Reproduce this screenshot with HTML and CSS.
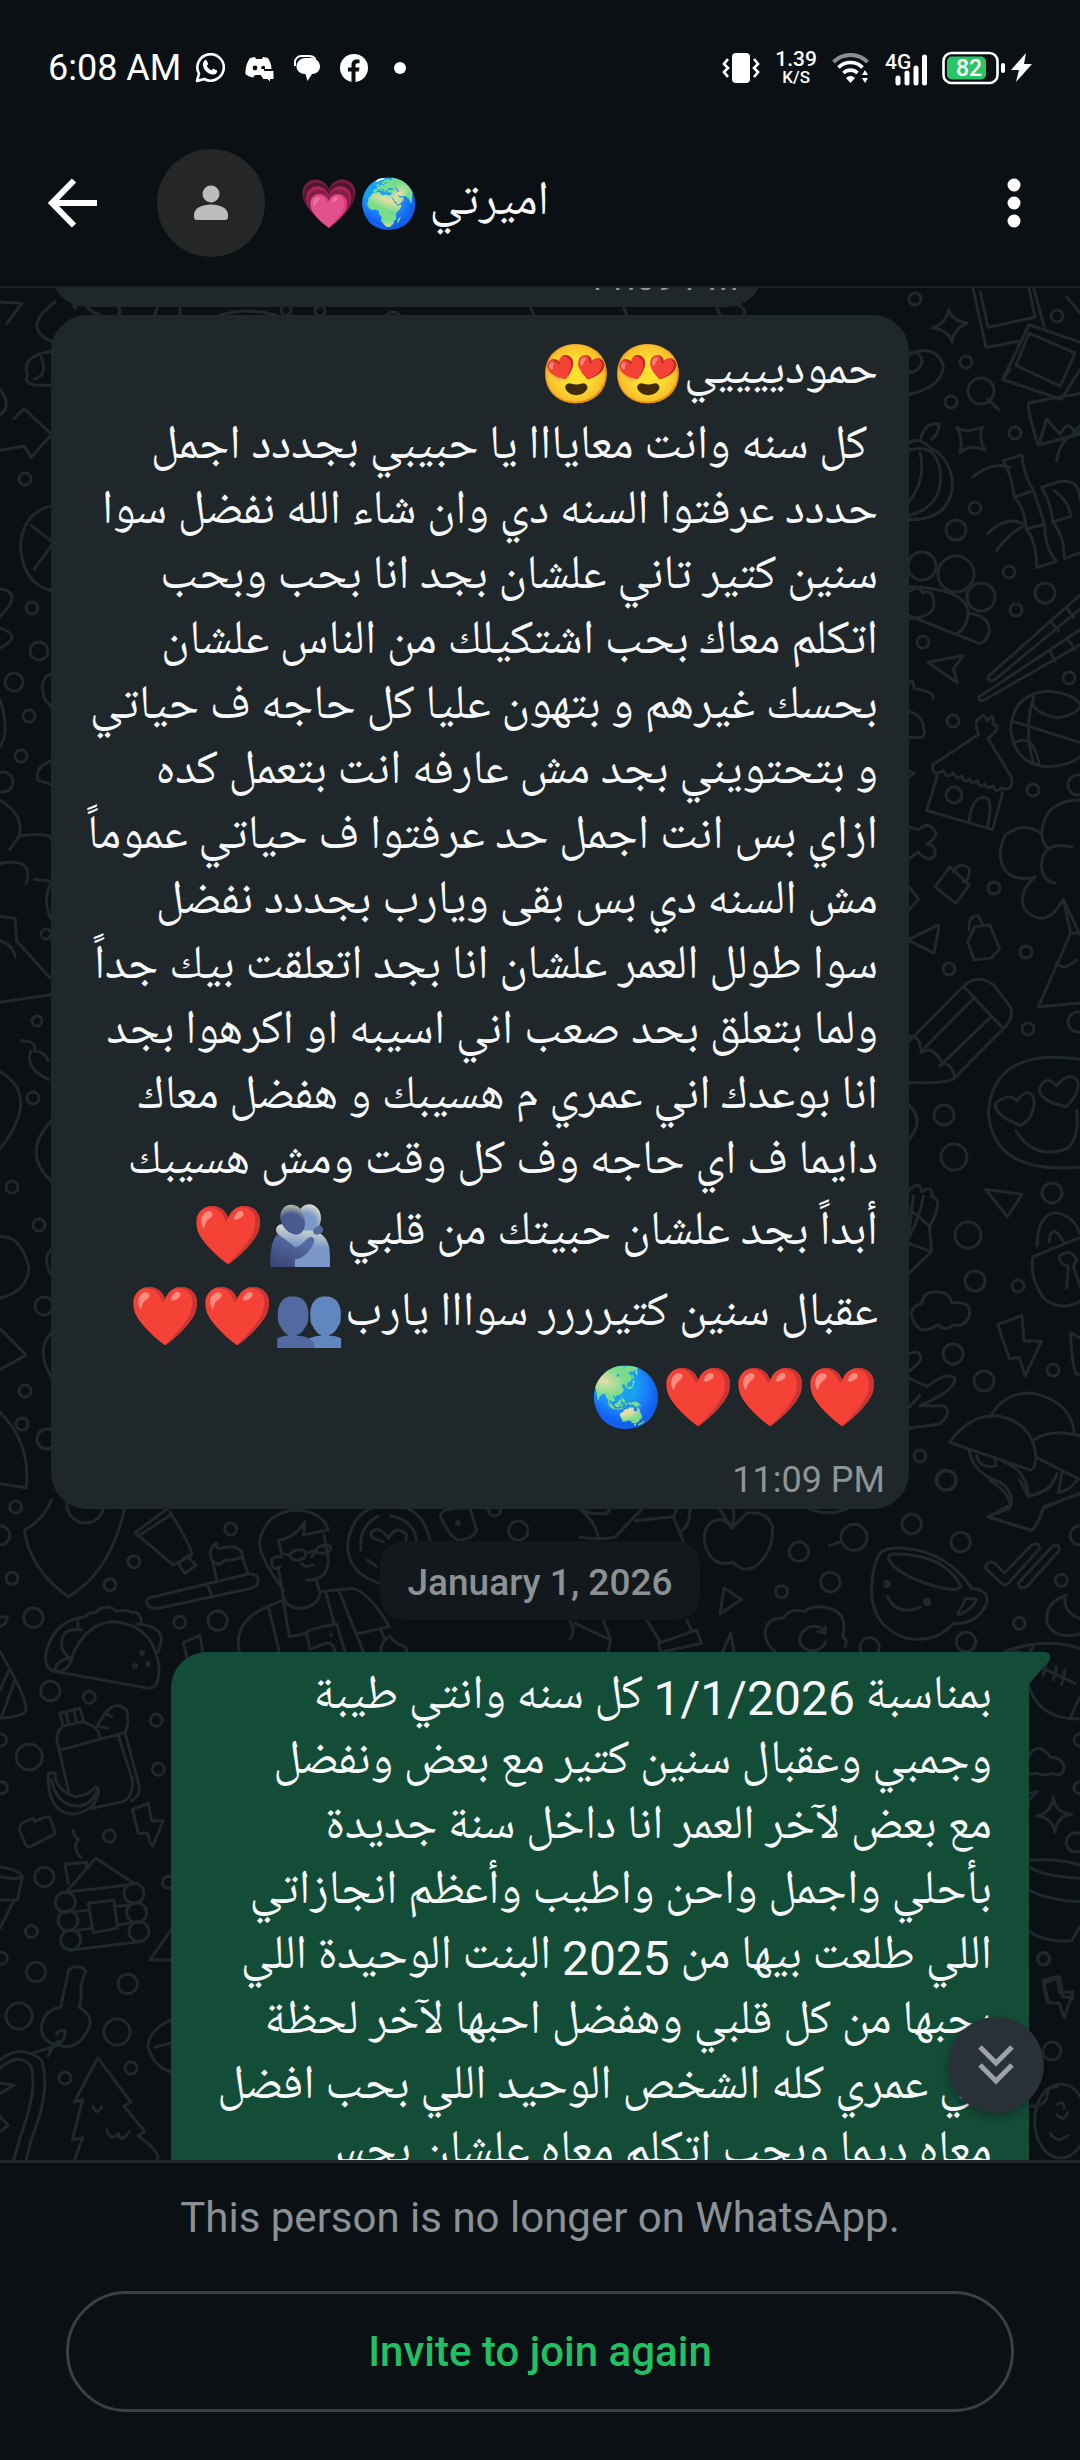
FILE: index.html
```
<!DOCTYPE html>
<html lang="ar">
<head>
    <meta charset="UTF-8">
    <meta name="viewport" content="width=device-width, initial-scale=1.0">
    <title>اميرتي</title>
    <link rel="stylesheet" href="styles.css">
</head>
<body>
    <div class="status-bar">
        <div class="status-group">
            <span class="clock">6:08 AM</span>
            <!-- whatsapp -->
            <svg width="30" height="30" viewBox="0 0 30 30">
                <path d="M2 28l2-7.300A13.200 13.200 0 1 1 9.300 26z" fill="none" stroke="#fff" stroke-width="2.600" stroke-linejoin="round"/>
                <path d="M9.500 7.600c.7-.8 1.800-.8 2.200 0l1.300 2.900c.2.600-.1 1.200-1.200 2.300.9 2 2.700 3.700 4.900 4.600 1.100-1.500 1.500-1.700 2.100-1.500l2.900 1.400c.6.300.6.700.3 1.600-.6 1.800-2.500 2.900-4.400 2.700-5-.7-9.400-5.300-9.700-9.600-.1-1.800.8-3.400 1.600-4.400z" fill="#fff"/>
            </svg>
            <!-- discord -->
            <svg width="30" height="30" viewBox="0 0 30 30">
                <path d="M6 5l5-1 1 2h6l1-2 5 1c2 3 3.500 7 3.500 11H20v8.500h-2L17 22h-6l-2 2.500c-3-.5-5.500-1.500-7.500-3.500C1 15 3 9 6 5z" fill="#fff"/>
                <circle cx="11" cy="15" r="2.400" fill="#0b1014"/>
                <path d="M17 15a2.400 2.400 0 0 1 4-1.500V16h-3z" fill="#0b1014"/>
                <path d="M19 18h10.500v8H26v2.500L23.500 26H19z" fill="#fff"/>
            </svg>
            <!-- messages -->
            <svg width="28" height="30" viewBox="0 0 28 30">
                <path d="M2 13V9c0-3 3-6 6-6h8c3 0 5 1 6.500 3" fill="none" stroke="#fff" stroke-width="2"/>
                <path d="M12 5h6c5 0 9 4 9 8.500S23.500 21 19 21l-4.500 7-2-7C7 21 3.500 17.500 3.500 13.500S7 5 12 5z" fill="#fff"/>
            </svg>
            <!-- facebook -->
            <svg width="28" height="28" viewBox="0 0 28 28">
                <circle cx="14" cy="14" r="14" fill="#fff"/>
                <path d="M11.500 28V17.500H8v-4h3.500V11c0-3.600 2-5.500 5.200-5.500 1.300 0 2.300.1 2.800.2v3.500h-1.900c-1.500 0-2.100.8-2.100 2.200v2.100h4l-.7 4h-3.300V28z" fill="#0b1014"/>
            </svg>
            <svg width="26" height="26" viewBox="0 0 26 26"><circle cx="13" cy="13" r="6" fill="#fff"/></svg>
        </div>
        <div class="status-group status-right">
            <!-- vibrate -->
            <svg width="38" height="30" viewBox="0 0 38 30">
                <rect x="10" width="18" height="30" rx="4" fill="#fff"/>
                <path d="M6 6L2 11l4 4-4 4 4 5M32 6l4 5-4 4 4 4-4 5" fill="none" stroke="#fff" stroke-width="2.600"/>
            </svg>
            <div class="net-speed"><span>1.39</span><span class="unit">K/S</span></div>
            <!-- wifi -->
            <svg width="38" height="30" viewBox="0 0 38 30">
                <path d="M1.500 9a24 24 0 0 1 34 0" fill="none" stroke="#8b8f92" stroke-width="4"/>
                <path d="M6.500 14.500a17 17 0 0 1 24 0M11.500 20a10 10 0 0 1 14 0" fill="none" stroke="#fff" stroke-width="3.600"/>
                <path d="M14 25a6 6 0 0 1 9 0l-4.500 5zM30 22l3-5 3 5zM30 25l3 5 3-5z" fill="#fff"/>
            </svg>
            <!-- signal -->
            <svg width="42" height="36" viewBox="0 0 42 36">
                <text x="0" y="19" class="net-type">4G</text>
                <path d="M13 28v5M22 23v10M31 18v15M39.500 7v26" stroke="#fff" stroke-width="5" stroke-linecap="round"/>
            </svg>
            <!-- battery -->
            <svg width="90" height="34" viewBox="0 0 90 34">
                <rect x="1.500" y="2" width="54" height="30" rx="8" fill="none" stroke="#fff" stroke-width="2.600"/>
                <rect x="5" y="5.500" width="39" height="23" rx="5" fill="#2bc467"/>
                <text x="14" y="25" class="charge">82</text>
                <rect x="59" y="12" width="4" height="10" rx="2" fill="#fff"/>
                <path d="M84 2L69 19h8l-3 12 16-18h-8z" fill="#fff"/>
            </svg>
        </div>
    </div>

    <header class="top-bar">
        <button class="icon-btn" aria-label="Back">
            <svg width="50" height="50" viewBox="0 0 50 50" fill="none" stroke="#fff" stroke-width="6">
                <path d="M49 25H5M26 2.500L4 25l22 22.500"/>
            </svg>
        </button>
        <div class="avatar">
            <svg width="36" height="36" viewBox="0 0 36 36" fill="#bdbdbd">
                <circle cx="18" cy="9" r="8.500"/>
                <path d="M1 30c0-7 8-10.500 17-10.500S35 23 35 30v2q0 3-3 3H4q-3 0-3-3z"/>
            </svg>
        </div>
        <h1 class="name" dir="rtl">اميرتي <span class="name-emoji">🌍<span class="pink">💗</span></span></h1>
        <button class="icon-btn menu-btn" aria-label="More options">
            <svg width="14" height="50" viewBox="0 0 14 50" fill="#fff">
                <circle cx="7" cy="7" r="6.500"/><circle cx="7" cy="25" r="6.500"/><circle cx="7" cy="43" r="6.500"/>
            </svg>
        </button>
    </header>

    <main class="chat">
        <!-- wallpaper doodles -->
        <svg class="wallpaper" viewBox="0 288 1080 1872" preserveAspectRatio="xMidYMin slice" aria-hidden="true">
            <g class="dots">
                <circle cx="915" cy="299" r="6"/><circle cx="1057" cy="316" r="6"/><circle cx="966" cy="362" r="6"/><circle cx="951" cy="402" r="6"/>
                <circle cx="981" cy="391" r="13"/><circle cx="1015" cy="433" r="6"/><circle cx="975" cy="508" r="6"/><circle cx="956" cy="530" r="10"/>
                <circle cx="956" cy="574" r="18"/><circle cx="981" cy="597" r="14"/><circle cx="922" cy="566" r="14"/><circle cx="1009" cy="572" r="6"/>
                <circle cx="1045" cy="593" r="10"/><circle cx="1016" cy="610" r="6"/><circle cx="923" cy="642" r="6"/><circle cx="1069" cy="678" r="6"/>
                <circle cx="953" cy="721" r="6"/><circle cx="1033" cy="790" r="6"/><circle cx="954" cy="795" r="8"/><circle cx="994" cy="888" r="6"/>
                <circle cx="1026" cy="952" r="6"/><circle cx="949" cy="969" r="6"/><circle cx="1028" cy="1029" r="6"/><circle cx="944" cy="1115" r="10"/>
                <circle cx="954" cy="1157" r="13"/><circle cx="1052" cy="1193" r="10"/><circle cx="968" cy="1235" r="13"/><circle cx="975" cy="1281" r="10"/>
                <circle cx="1018" cy="1286" r="6"/><circle cx="953" cy="1354" r="10"/><circle cx="984" cy="1381" r="10"/><circle cx="1053" cy="1370" r="6"/>
                <circle cx="920" cy="1456" r="6"/><circle cx="946" cy="1480" r="10"/><circle cx="1078" cy="785" r="10"/><circle cx="1078" cy="1022" r="10"/>
                <circle cx="25" cy="479" r="6"/><circle cx="32" cy="608" r="6"/><circle cx="39" cy="651" r="9"/><circle cx="14" cy="682" r="9"/>
                <circle cx="29" cy="716" r="6"/><circle cx="21" cy="756" r="6"/><circle cx="3" cy="782" r="10"/><circle cx="46" cy="934" r="5"/>
                <circle cx="37" cy="1021" r="5"/><circle cx="33" cy="1098" r="6"/><circle cx="12" cy="1187" r="6"/><circle cx="39" cy="1225" r="6"/>
                <circle cx="25" cy="1391" r="6"/><circle cx="22" cy="1424" r="6"/><circle cx="44" cy="1306" r="9"/><circle cx="47" cy="1439" r="10"/>
                <circle cx="19" cy="2016" r="13"/><circle cx="117" cy="2032" r="13"/><circle cx="131" cy="2068" r="6"/><circle cx="65" cy="2078" r="6"/>
                <circle cx="1044" cy="1959" r="6"/><circle cx="1052" cy="2051" r="9"/>
                <circle cx="286" cy="310" r="5"/><circle cx="320" cy="311" r="5"/><circle cx="393" cy="320" r="8"/>
            </g>
            <!-- right edge: frames, pumpkin, palms, house, pencil, lock, umbrella -->
            <g transform="translate(900 280) scale(.3333 .829)">
                <path d="M95 58Q140 52 145 36Q158 50 202 52Q158 60 157 75Q145 60 95 58zM219 10L258 81L355 74M241 15L264 57L405 45L387 10M400 8L434 58M500 20L540 40M330 108Q305 122 308 120L387 54L540 75M308 120L484 144L540 108M387 64L525 88L481 128L348 103zM386 148Q380 155 414 199L540 186M386 148L540 137M418 196L440 168L480 186Q505 168 520 182L540 176M470 218Q480 190 540 182"/>
                <path d="M27 88Q60 84 66 98Q62 110 27 112M27 90Q110 76 130 104Q125 130 27 138M264 144L298 157M170 178Q200 186 247 177Q235 190 254 205Q210 198 180 208Q190 190 170 178zM62 192Q75 170 118 174Q115 186 95 192M27 196Q60 188 100 206M27 205Q120 195 122 240Q118 275 27 284M60 208Q80 240 27 268M100 204Q158 220 157 250Q145 290 27 289"/>
                <path d="M219 237Q280 218 330 226M310 218L366 211Q370 235 400 254L343 262Q335 235 310 218M343 262Q375 275 378 300L434 295L400 254M378 300Q410 315 410 347L470 339Q435 325 434 295M263 306Q320 282 378 296M290 326Q330 305 366 298M425 250L480 243Q540 240 540 265M425 250Q455 270 458 292L512 285Q510 268 462 254M458 292Q495 310 493 336L540 329"/>
                <path d="M27 376Q60 366 68 378Q100 370 102 394Q90 408 27 408M27 370Q200 372 205 402Q200 420 170 427M205 402Q270 405 268 424Q255 440 235 438L27 405M83 461L190 453L160 469L172 486zM540 380L265 478Q262 486 285 482L540 397M540 422L237 503Q235 510 256 506L540 440M455 413L475 423M503 397L520 407M450 448L465 460M505 434L525 446"/>
                <path d="M27 487Q40 478 42 493Q100 495 100 505M27 520Q70 526 70 540Q80 548 64 552H27M332 542Q338 500 440 496Q520 498 540 512M332 542Q345 585 440 587Q510 586 540 575M335 532L540 558M402 502Q380 520 470 528Q520 526 540 516M402 502Q370 540 400 583M345 558Q400 545 418 585"/>
                <path d="M98 585L236 548Q220 530 238 530Q250 520 262 532Q285 520 278 536Q310 538 264 553L335 600Q342 618 303 613Q285 620 279 610Q260 615 255 608Q238 614 232 604Q215 610 208 602Q192 608 185 598Q170 604 160 595Q140 602 130 592Q95 600 98 585M112 598L80 640L278 663L308 618M207 654Q215 620 262 625Q278 630 262 660M27 592L42 595L27 600M27 660L55 663Q85 652 105 665Q115 672 82 680Q118 685 100 696Q80 702 55 690L27 698"/>
                <path d="M540 627Q430 628 425 668Q370 652 315 670Q280 700 330 718Q370 725 405 720Q350 740 375 760Q440 785 490 747L540 790M425 668Q430 682 442 684M515 684Q425 675 424 708Q430 725 465 728M490 747L512 788L415 877L540 872M512 788H540M470 823Q490 835 530 820M105 732L150 708L208 730L168 752zM160 714Q180 700 208 710Q212 722 190 726M203 798L225 780L270 778L299 807L272 818L222 820zM207 784Q205 766 235 767L248 778M27 795L100 781Q118 776 116 782L102 812L27 797M27 732L56 747L27 760"/>
                <path d="M190 852Q230 836 280 850L330 876Q345 890 310 903L165 962Q150 970 27 968M27 918L190 852L310 903M65 930L222 866M120 948L275 888M27 912Q60 910 64 932Q100 922 128 946Q150 942 165 962M540 940Q280 925 265 1004Q280 1080 540 1070M348 1026Q400 1062 500 1048Q540 1035 530 1002M350 990Q330 980 290 992Q270 1005 362 1020Q405 1010 402 988Q385 972 350 990M470 972Q440 958 418 975Q415 990 498 997Q535 985 535 968Q510 952 470 972M27 995Q75 1015 27 1037"/>
                <path d="M257 1097L366 1103L322 1130zM27 1098Q60 1085 65 1100Q100 1090 95 1106Q120 1108 110 1122Q100 1135 88 1142L95 1172L27 1198M27 1120L90 1142M40 1105L27 1150M27 1162L93 1172M70 1105Q60 1130 27 1155M412 1165Q410 1130 465 1125Q520 1128 540 1150M447 1160Q455 1135 490 1160M400 1178L540 1155M400 1178Q385 1200 430 1228Q480 1245 540 1232M500 1216L505 1190Q470 1185 482 1176Q515 1168 530 1182L520 1190L540 1214M40 1255Q20 1240 65 1235Q70 1218 120 1221Q150 1222 155 1234Q215 1230 208 1250Q190 1265 160 1260Q135 1270 115 1260Q60 1275 40 1255"/>
                <path d="M293 1260L366 1249L372 1280L424 1280L376 1322L358 1300L328 1301zM512 1270L540 1276M512 1270Q515 1310 530 1320H540M27 1295Q65 1290 62 1302Q50 1310 27 1316M27 1325L82 1335Q140 1315 165 1325Q165 1340 58 1358H130Q160 1365 120 1380L27 1385M60 1345L27 1360M149 1402Q210 1368 290 1370Q400 1378 408 1420Q405 1440 380 1434L149 1402M275 1368Q320 1340 400 1343Q510 1352 523 1390M400 1400Q450 1385 540 1394M408 1420L540 1447M207 1412Q220 1440 300 1450Q350 1465 328 1482L262 1492L395 1508Q420 1500 430 1480L540 1464M230 1418Q240 1435 290 1430L285 1424M312 1426Q380 1435 385 1467Q460 1460 470 1440M485 1440L475 1463Q510 1460 530 1448"/>
            </g>
            <!-- left edge -->
            <g transform="translate(0 300) scale(.6888 .3954)">
                <path d="M0 5L32 8L10 60M80 5Q30 70 75 105M75 130Q30 140 40 190Q30 220 75 215M60 145Q70 190 50 200M0 225Q18 270 0 290M20 300L35 275L75 340L45 398L35 370L0 380M75 520Q30 540 30 630Q35 720 75 735M45 570L75 610M50 680L75 620M0 730Q35 740 0 800M0 830Q35 850 0 880M75 945Q55 955 65 1010L75 1030M0 1010Q15 1090 0 1130M75 1165Q50 1180 55 1215L75 1225M0 1265Q35 1300 28 1355Q75 1345 75 1365M28 1355L14 1390M0 1425Q50 1410 38 1475M50 1465L75 1470Q60 1520 75 1568"/>
                <path d="M110 20Q100 10 125 12Q130 30 145 38M160 5Q180 20 172 38M230 10L225 38M260 8L262 38M320 38Q360 18 400 38M770 20L775 38M905 18L910 38M1040 15L1045 38M1065 8Q1085 20 1080 38"/>
            </g>
            <g transform="translate(0 900) scale(.6888 .4082)">
                <path d="M22 45L0 40M22 45L24 100L72 190M0 100Q20 110 22 140M0 250L75 232M30 345Q55 345 50 370Q65 370 70 395M45 370Q35 410 70 440M0 420Q60 480 0 610M75 540Q30 620 75 690M0 825Q30 820 42 900Q40 960 0 975M75 855Q60 880 75 920M0 1050L38 1115L0 1150M75 1060Q50 1100 75 1170M0 1255Q45 1330 38 1440L0 1430"/>
            </g>
            <!-- around the date chip -->
            <g transform="translate(0 1500) scale(.3333)">
                <circle cx="47" cy="21" r="18"/><circle cx="0" cy="106" r="29"/><circle cx="36" cy="235" r="18"/><circle cx="100" cy="353" r="29"/><circle cx="330" cy="254" r="18"/><circle cx="402" cy="185" r="18"/>
                <circle cx="692" cy="87" r="18"/><circle cx="539" cy="367" r="18"/><circle cx="653" cy="362" r="29"/><circle cx="151" cy="573" r="29"/><circle cx="268" cy="592" r="18"/><circle cx="469" cy="661" r="18"/>
                <circle cx="88" cy="771" r="39"/><circle cx="475" cy="808" r="18"/><circle cx="328" cy="1008" r="18"/><circle cx="133" cy="1131" r="29"/><circle cx="94" cy="1295" r="18"/><circle cx="108" cy="1416" r="29"/><circle cx="383" cy="1452" r="29"/>
                <circle cx="2" cy="720" r="18"/><circle cx="4" cy="863" r="18"/><circle cx="4" cy="1375" r="18"/><circle cx="505" cy="1147" r="18"/><circle cx="1484" cy="30" r="18"/><circle cx="1555" cy="92" r="29"/><circle cx="256" cy="14" r="55"/>
                <path d="M155 0Q130 60 73 90Q90 210 205 290Q330 220 376 20M500 28L405 98L520 195L575 165Q580 150 510 35M415 108L512 45M535 192L562 168L588 196L555 220zM443 295L745 222Q780 220 773 250Q765 265 740 268L475 325Q430 325 443 295M622 255L637 290M650 240L638 185Q620 150 648 130Q650 150 665 145Q730 130 728 175L745 222M640 185Q660 200 670 182Q700 180 728 172"/>
                <path d="M850 270Q770 160 780 120Q800 30 900 30Q970 40 985 90L910 105L915 65Q890 110 835 122L845 160L868 166Q880 145 910 150Q925 165 910 175Q880 190 868 166M918 160L945 152M935 170Q945 160 948 150Q960 130 990 138Q1000 160 960 160Q950 160 948 150M972 105L985 180Q985 240 920 240M905 190Q915 205 938 195M845 170Q805 165 818 200Q825 210 840 200M835 205L850 290Q860 325 905 325Q960 315 960 275L948 240M718 455Q700 370 790 325L850 300M805 320L838 455M850 300L868 410L920 400M920 400Q910 390 1010 372L1035 455M920 400L930 448L975 430Q1000 425 1005 455M960 275L1060 265Q1110 280 1168 380L1070 402M978 278L1002 370M1018 275L1090 455M1142 388L1155 420M1142 455Q1145 420 1170 408Q1180 430 1215 440L1222 455"/>
                <path d="M1140 250Q1040 220 1043 130Q1060 20 1165 10Q1270 20 1290 120M1083 150Q1075 80 1135 48M1172 47Q1240 60 1250 120M1150 125Q1110 115 1113 100Q1130 70 1166 115Q1190 70 1220 105L1218 122M1103 180L1130 200M1322 50Q1320 20 1410 25L1430 90Q1420 115 1380 122Q1350 115 1322 50M550 428L600 406L608 455M550 428L560 470"/>
                <path d="M170 515Q130 510 138 460Q160 370 235 355Q260 350 265 340Q290 340 295 330Q325 310 350 335Q380 325 395 338Q420 330 425 370M170 515Q210 515 220 460Q260 370 340 365Q420 370 455 430Q490 500 470 550Q460 570 435 563L170 515M235 385Q230 360 240 352M410 372Q480 375 485 420Q480 440 475 455M245 390Q180 380 185 440Q190 460 205 470M165 510Q170 480 215 472"/>
                <path d="M180 640L240 625L252 665L190 678zM198 637L206 675M222 630L230 668M190 678Q165 700 172 725L208 885M180 750L375 698Q390 670 380 630Q350 600 315 640L290 680M245 665Q300 680 300 715M315 640L335 650M298 680L325 685M355 705L397 840Q400 890 370 905L275 925M375 698L418 860Q420 890 395 902M145 820L165 818Q165 870 225 890Q270 885 285 862Q310 865 280 915Q240 950 200 940Q140 920 145 820M155 840Q170 920 240 918Q280 910 292 870"/>
                <path d="M0 455Q80 590 78 630Q70 650 0 655M25 515L0 570M45 540L5 650M0 380Q22 370 22 350L0 352M58 990Q60 970 75 965L100 955L105 965Q130 950 148 950L165 995Q165 1005 150 1010L90 1040Q80 1042 75 1030zM397 928L445 910L455 962L490 962L458 1038Q450 1035 443 1000L415 1000zM220 992Q215 1000 235 1018Q215 1045 243 1072M200 1175L287 1075L405 1152L190 1178M205 1150L195 1093L260 1087V1105M0 1100Q60 1110 67 1130L52 1200H0M0 1130Q40 1140 65 1132M40 1205L0 1285"/>
                <circle cx="196" cy="1207" r="30"/><circle cx="204" cy="1262" r="30"/><circle cx="212" cy="1320" r="30"/><circle cx="402" cy="1180" r="30"/><circle cx="410" cy="1238" r="30"/><circle cx="417" cy="1295" r="30"/>
                <path d="M226 1235L270 1230M235 1290L278 1285M345 1220L385 1215M350 1275L388 1270M212 1350L425 1325M265 1210L342 1200L352 1285L280 1298zM513 1290L450 1380H513"/>
            </g>
            <g class="specks"><circle cx="142" cy="1653" r="3"/><circle cx="148" cy="1664" r="3"/><circle cx="135" cy="1666" r="3"/><circle cx="331" cy="1635" r="2"/><circle cx="458" cy="1523" r="3"/><circle cx="887" cy="1584" r="4"/><circle cx="927" cy="1602" r="4"/></g>
            <g transform="translate(560 1480) scale(.3333)">
                <circle cx="717" cy="215" r="29"/><circle cx="882" cy="172" r="39"/><circle cx="1055" cy="132" r="29"/><circle cx="1160" cy="2" r="29"/><circle cx="1202" cy="186" r="29"/><circle cx="1504" cy="301" r="18"/><circle cx="811" cy="306" r="29"/><circle cx="665" cy="335" r="18"/>
                <circle cx="1378" cy="430" r="18"/><circle cx="1218" cy="486" r="29"/><circle cx="929" cy="502" r="29"/><circle cx="1560" cy="166" r="29"/><circle cx="1548" cy="1087" r="29"/><circle cx="1450" cy="1436" r="18"/><circle cx="1560" cy="780" r="18"/><circle cx="1560" cy="923" r="18"/>
                <path d="M843 185L808 197M515 145Q500 115 470 120Q430 130 433 185Q450 265 520 247Q550 280 585 260Q640 220 638 140Q620 90 560 100L515 145Q525 110 520 87M480 87L515 145M60 87L95 100L140 102L150 87M245 87L165 172Q120 180 60 172M60 87Q110 130 115 175M225 122L340 110L350 87M340 110L370 185M390 87Q390 140 360 155M750 87Q800 110 860 87"/>
                <path d="M965 215Q1000 195 1080 212Q1180 240 1235 325Q1290 330 1280 370Q1250 435 1180 430Q1130 490 1040 475Q930 440 935 320Q940 240 965 215M1000 222Q1150 220 1203 318Q1195 335 1150 325Q1010 290 985 235Q985 225 1000 222M1218 355L1248 357Q1250 375 1205 402Q1190 405 1195 398zM983 350Q1010 410 1082 382M1278 255Q1290 240 1305 250L1333 280L1415 195Q1435 185 1440 205L1345 310Q1335 318 1325 310L1280 268Q1275 260 1278 255M1375 310L1478 198Q1500 190 1497 212L1400 320Q1380 330 1375 310M1285 110L1350 75Q1350 40 1290 0M1285 110L1415 152Q1430 140 1450 85Q1480 70 1560 40M1380 0L1405 50Q1480 30 1480 0M1520 345Q1450 370 1462 430Q1485 480 1560 462M1515 348Q1510 400 1560 415"/>
                <path d="M492 325L545 358L480 402zM855 500Q865 480 848 470Q870 380 770 380Q740 385 735 395Q690 380 670 415Q620 410 615 460Q620 500 645 513M797 455Q780 435 750 440Q710 460 722 495Q740 515 765 512Q790 505 797 485M797 440L795 460L775 455M488 515L512 460L522 515M295 490L410 450L425 490L310 515M295 490L302 515M260 420L300 485M380 420L395 452M130 420L152 480L145 515M45 430L152 480M30 425Q50 450 30 475"/>
                <path d="M1335 515Q1450 470 1560 505M1407 620Q1440 720 1560 717M1360 515L1380 516M1410 515L1420 500M1440 560L1545 610M1460 545L1450 585M1490 560L1480 600M1515 570L1505 615M1560 650L1530 715M1407 830Q1430 780 1470 830Q1520 835 1510 875Q1500 890 1475 880Q1460 890 1430 880L1407 883M1407 940L1433 935L1407 960M1480 950Q1485 1000 1535 1002Q1490 1010 1485 1057Q1475 1010 1428 1008Q1475 1000 1480 950M1407 1140Q1500 1135 1560 1155M1407 1160Q1450 1190 1560 1195M1407 1230Q1460 1260 1560 1265M1407 1355Q1460 1390 1535 1382L1560 1340M1450 1510L1500 1492L1508 1550L1540 1555M1450 1510L1460 1560"/>
            </g>
            <!-- key, guitar, fir tree, faces -->
            <g transform="translate(0 1500) scale(.6888 .421)">
                <path d="M100 1115Q115 1100 125 1120Q115 1150 118 1180L115 1205Q135 1225 130 1250Q115 1310 85 1295Q60 1290 60 1250Q65 1210 88 1205zM82 1270Q85 1255 95 1262Q95 1290 75 1300L50 1312M85 1285Q75 1300 70 1320M0 1330Q30 1290 60 1330Q75 1400 45 1520L38 1568M0 1350Q25 1310 45 1345Q55 1400 30 1510L20 1568M0 1385L20 1390L0 1410M0 1465L12 1485L0 1500M142 1325L108 1430L120 1425L105 1520L120 1515L108 1568M142 1325L190 1430L180 1440L210 1500L200 1510Q235 1550 228 1568M135 1440Q140 1465 148 1440M155 1495Q160 1525 172 1505Q175 1530 188 1500M248 1235Q215 1260 215 1300Q225 1350 248 1358M248 1290L225 1300"/>
                <path d="M1515 1140L1535 1132L1538 1170L1558 1168L1545 1230L1538 1195L1522 1195zM1495 1440Q1515 1440 1520 1420Q1520 1390 1535 1395"/>
                <ellipse cx="1540" cy="1475" rx="38" ry="88"/>
                <path d="M1535 1435Q1545 1425 1545 1445M1535 1460Q1545 1480 1550 1455M1525 1505Q1535 1530 1550 1510"/>
            </g>
        </svg>

        <div class="messages">
            <div class="bubble incoming earlier">
                <time dir="ltr">11:09 PM</time>
            </div>

            <div class="bubble incoming">
                <p class="text" dir="rtl">حمودييييي<span class="emoji">😍😍</span><br>
                &nbsp;كل سنه وانت معايااا يا حبيبي بجددد اجمل<br>
                حددد عرفتوا السنه دي وان شاء الله نفضل سوا<br>
                سنين كتير تاني علشان بجد انا بحب وبحب<br>
                اتكلم معاك بحب اشتكيلك من الناس علشان<br>
                بحسك غيرهم و بتهون عليا كل حاجه ف حياتي<br>
                و بتحتويني بجد مش عارفه انت بتعمل كده<br>
                ازاي بس انت اجمل حد عرفتوا ف حياتي عموماً<br>
                مش السنه دي بس بقى ويارب بجددد نفضل<br>
                سوا طولل العمر علشان انا بجد اتعلقت بيك جداً<br>
                ولما بتعلق بحد صعب اني اسيبه او اكرهوا بجد<br>
                انا بوعدك اني عمري م هسيبك و هفضل معاك<br>
                دايما ف اي حاجه وف كل وقت ومش هسيبك<br>
                أبداً بجد علشان حبيتك من قلبي <span class="emoji"><span class="muted">🫂</span>❤️</span><br>
                عقبال سنين كتيرررر سوااا يارب<span class="emoji"><span class="muted">👥</span>❤️❤️</span><br>
                <span class="emoji">❤️❤️❤️🌏</span></p>
                <time dir="ltr">11:09 PM</time>
            </div>

            <div class="date-chip" dir="ltr">January 1, 2026</div>

            <div class="bubble outgoing">
                <svg class="tail" width="22" height="32" viewBox="0 0 22 32"><path d="M0 0h16q8 2 4 9L0 32z" fill="#144d37"/></svg>
                <p class="text" dir="rtl">بمناسبة <bdi class="num">1/1/2026</bdi> كل سنه وانتي طيبة<br>
                وجمبي وعقبال سنين كتير مع بعض ونفضل<br>
                مع بعض لآخر العمر انا داخل سنة جديدة<br>
                بأحلي واجمل واحن واطيب وأعظم انجازاتي<br>
                اللي طلعت بيها من <bdi class="num">2025</bdi> البنت الوحيدة اللي<br>
                بحبها من كل قلبي وهفضل احبها لآخر لحظة<br>
                في عمري كله الشخص الوحيد اللي بحب افضل<br>
                معاه ديما وبحب اتكلم معاه علشان بحس</p>
            </div>
        </div>

        <button class="scroll-down" aria-label="Scroll to bottom">
            <svg width="40" height="44" viewBox="0 0 40 44" fill="none" stroke="#9ba1a5" stroke-width="5">
                <path d="M4 4l16 16L36 4M4 22l16 16 16-16"/>
            </svg>
        </button>
    </main>

    <footer class="bottom-bar" dir="ltr">
        <p class="notice">This person is no longer on WhatsApp.</p>
        <button class="invite-btn">Invite to join again</button>
    </footer>
</body>
</html>
```
FILE: styles.css
```
* {
    box-sizing: border-box;
}

body {
    display: flex;
    flex-direction: column;
    height: 100vh;
    margin: 0;
    background-color: #0b1014;
    color: #f7f8fa;
    font-family: Roboto, "Noto Naskh Arabic", "Noto Sans", sans-serif;
}

button {
    font-family: inherit;
    padding: 0;
    border: none;
    background: none;
    cursor: pointer;
}

svg {
    display: block;
}

/* status bar */
.status-bar {
    display: flex;
    justify-content: space-between;
    height: 120px;
    padding: 16px 48px 0;
    color: white;
}

.status-group {
    display: flex;
    align-items: center;
    gap: 19px;
}

.status-right {
    gap: 15px;
}

.clock {
    margin-right: -5px;
    font-size: 36px;
    line-height: 42px;
}

.net-speed {
    display: flex;
    flex-direction: column;
    align-items: center;
    font-size: 21px;
    font-weight: 500;
    line-height: 18px;
}

.unit {
    font-size: 17px;
}

.net-type {
    font-size: 21px;
    font-weight: 500;
    fill: white;
}

.charge {
    font-size: 23px;
    font-weight: 500;
    fill: white;
}

/* header */
.top-bar {
    display: flex;
    align-items: center;
    height: 168px;
    padding: 0 59px 0 48px;
    border-bottom: 2px solid #1a2024;
}

.avatar {
    display: flex;
    justify-content: center;
    align-items: center;
    width: 108px;
    height: 108px;
    margin: 0 34px 0 59px;
    border-radius: 50%;
    background-color: #242726;
}

.name {
    margin: 0;
    font-family: "Noto Naskh Arabic", Roboto, sans-serif;
    font-size: 48px;
    font-weight: 400;
    line-height: 65px;
}

.name-emoji {
    vertical-align: -6px;
    line-height: 1;
}

.pink {
    filter: brightness(1.2) saturate(0.8);
}

.menu-btn {
    margin-left: auto;
}

/* chat */
.chat {
    position: relative;
    flex: 1;
    min-height: 0;
    overflow: hidden;
}

.wallpaper {
    position: absolute;
    top: 0;
    left: 0;
    width: 100%;
    height: 100%;
    fill: none;
    stroke: #20282c;
    stroke-width: 3px;
    stroke-linecap: round;
    stroke-linejoin: round;
}

.wallpaper * {
    vector-effect: non-scaling-stroke;
}

.specks {
    fill: #20282c;
    stroke: none;
}

.messages {
    position: relative;
    display: flex;
    flex-direction: column;
    padding: 0 51px;
}

.bubble {
    position: relative;
    border-radius: 36px;
}

.incoming {
    margin: 0 120px 32px 0;
    padding: 19px 24px 8px;
    background-color: #1f272a;
}

.outgoing {
    margin-left: 120px;
    padding: 13px 30px 8px;
    border-top-right-radius: 0;
    background-color: #144d37;
}

/* only the end of this one is still in view */
.earlier {
    margin: -71px 266px 8px 0;
}

.text {
    margin: 0;
    padding: 0 7px;
    font-family: "Noto Naskh Arabic", Roboto, sans-serif;
    font-size: 48px;
    line-height: 65px;
    white-space: nowrap;
}

.emoji {
    display: inline-block;
    padding: 6px 0;
    font-family: Roboto, sans-serif;
    font-size: 58px;
    line-height: 69px;
    vertical-align: -11px;
}

.muted {
    filter: saturate(0.45) hue-rotate(15deg);
}

.num {
    font-family: Roboto, sans-serif;
    line-height: 1;
    vertical-align: -7px;
}

.bubble time {
    display: block;
    margin-top: 21px;
    color: #8f9497;
    font-size: 36px;
    line-height: 42px;
    text-align: right;
}

.tail {
    position: absolute;
    top: 0;
    left: 100%;
}

.date-chip {
    align-self: center;
    margin-bottom: 32px;
    padding: 20px 28px 16px;
    border-radius: 24px;
    background-color: #12181c;
    color: #8b9195;
    font-size: 37px;
    font-weight: 500;
    line-height: 43px;
}

.scroll-down {
    position: absolute;
    right: 36px;
    bottom: 47px;
    display: flex;
    justify-content: center;
    align-items: center;
    width: 96px;
    height: 96px;
    border-radius: 50%;
    background-color: #283138;
    box-shadow: 0 4px 8px rgba(0, 0, 0, 0.3);
}

/* footer */
.bottom-bar {
    padding: 30px 66px 48px;
    border-top: 3px solid #22282c;
    text-align: center;
}

.notice {
    margin: 0 0 48px;
    color: #8b9195;
    font-size: 42px;
    line-height: 50px;
}

.invite-btn {
    width: 100%;
    height: 121px;
    border: 3px solid #3a4043;
    border-radius: 61px;
    color: #21c063;
    font-size: 42px;
    font-weight: 500;
}
```
